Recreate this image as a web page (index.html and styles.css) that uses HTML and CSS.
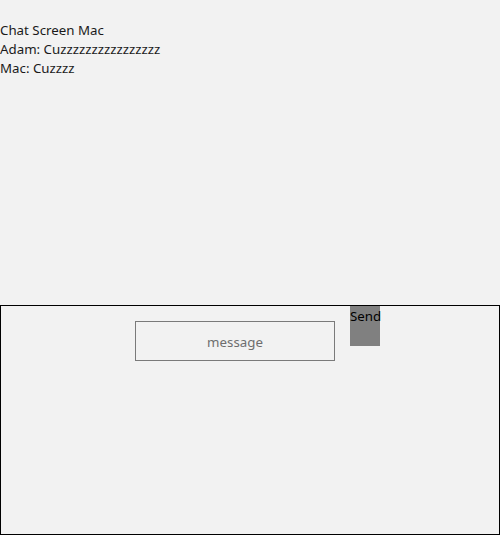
FILE: index.html
```html
<!DOCTYPE html>
<html>
<head>
<meta charset="utf-8">
<link rel="stylesheet" href="styles.css">
</head>
<body>
<div class="app">
  <div class="chat">
    <div class="line">Chat Screen Mac</div>
    <div class="line">Adam: Cuzzzzzzzzzzzzzzzz</div>
    <div class="line">Mac: Cuzzzz</div>
  </div>
  <div class="composer">
    <div class="field">message</div>
    <div class="send">Send</div>
  </div>
</div>
</body>
</html>
```
FILE: styles.css
```css
html, body {
  margin: 0;
  padding: 0;
  background: #f2f2f2;
}
.app {
  width: 500px;
  height: 535px;
  display: flex;
  flex-direction: column;
  font-family: "Noto Sans", "Open Sans", sans-serif;
  font-size: 13.3px;
  color: #1a1a1a;
}
.chat {
  height: 305px;
  padding-top: 21px;
  box-sizing: border-box;
}
.line {
  height: 19px;
  line-height: 19px;
}
.composer {
  flex: 1;
  border: 1px solid #000;
  display: flex;
  align-items: flex-start;
  padding-left: 134px;
  gap: 15px;
}
.field {
  margin-top: 15px;
  width: 198px;
  height: 38px;
  padding-top: 2px;
  box-sizing: content-box;
  height: 36px;
  border: 1px solid #7a7a7a;
  display: flex;
  align-items: center;
  justify-content: center;
  color: #6e6e6e;
}
.send {
  width: 30px;
  height: 40px;
  background: #808080;
  color: #000;
  line-height: 20px;
  text-align: center;
  font-size: 13.3px;
}
```
